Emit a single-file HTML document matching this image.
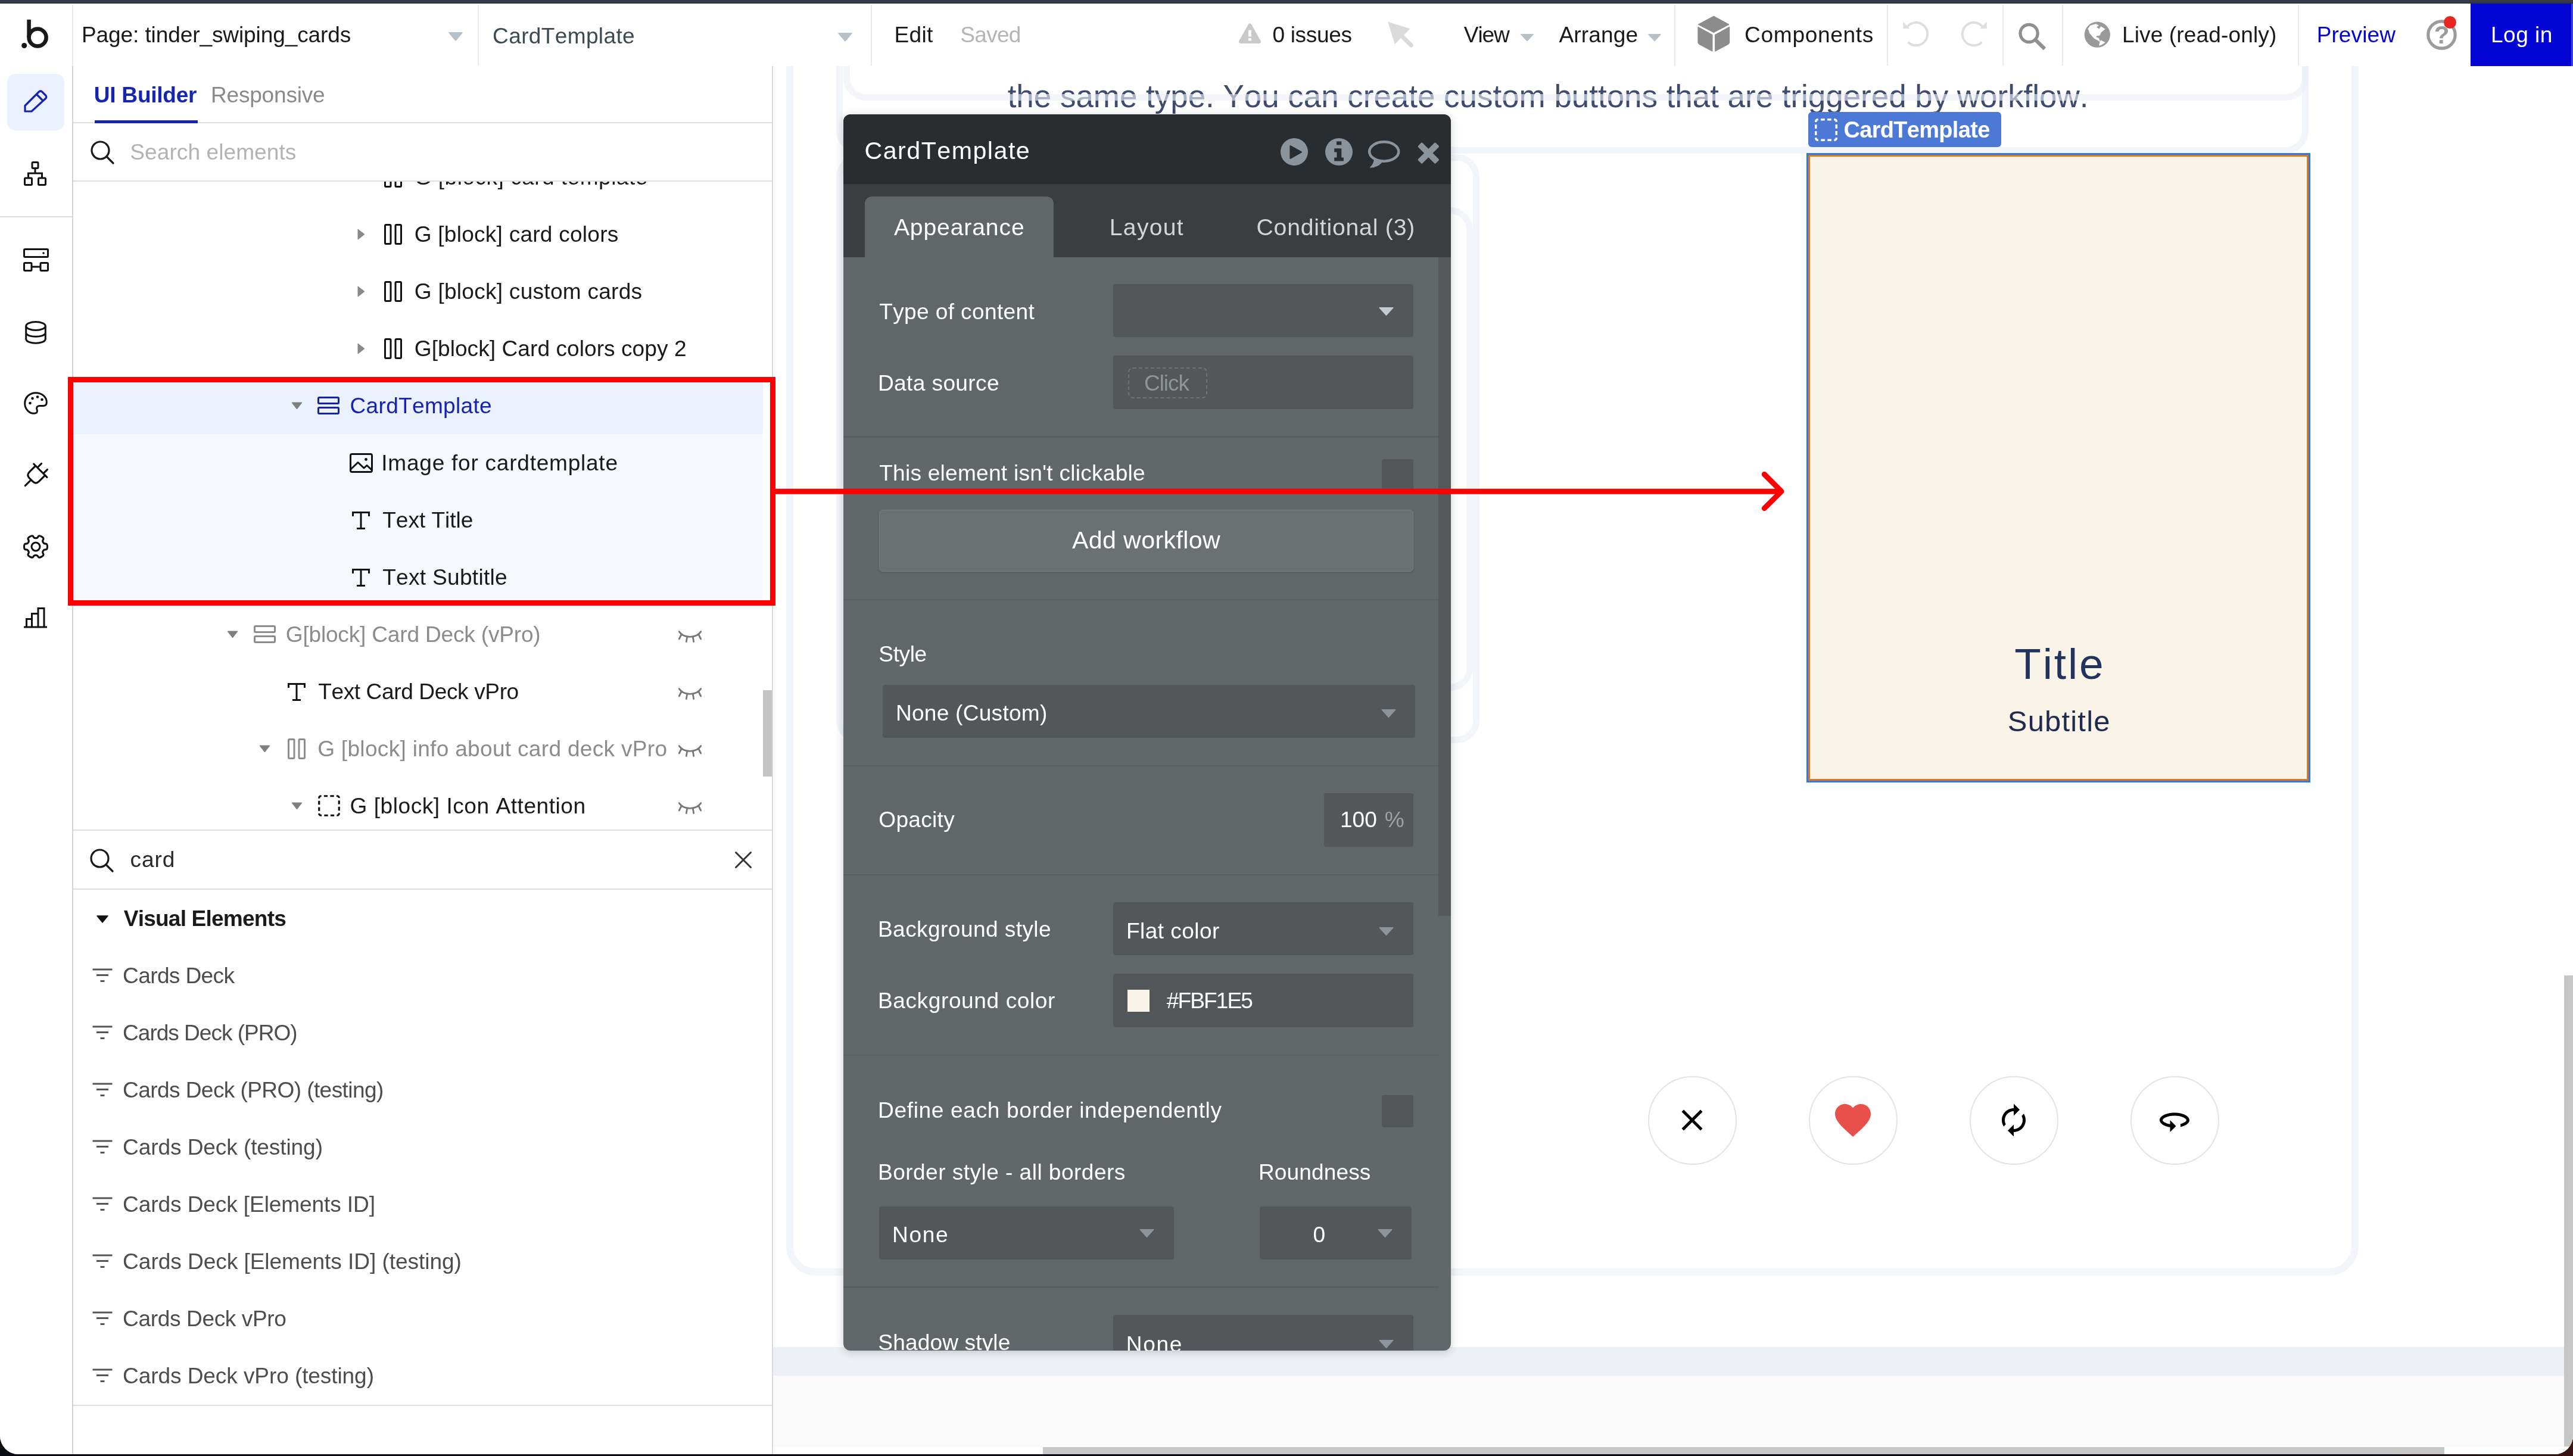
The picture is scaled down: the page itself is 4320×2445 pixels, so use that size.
<!DOCTYPE html>
<html lang="en"><head><meta charset="utf-8">
<title>Bubble editor - tinder_swiping_cards</title>
<style>

html,body{margin:0;padding:0;}
body{width:4320px;height:2445px;overflow:hidden;background:linear-gradient(90deg,#0b0d13 0%,#0b0d13 92%,#3a1414 100%);font-family:"Liberation Sans",Arial,sans-serif;}
#app{will-change:transform;position:absolute;left:0;top:0;width:4320px;height:2442px;overflow:hidden;background:#fff;border-radius:0 0 31px 31px;}
.layer{position:absolute;left:0;top:0;width:4320px;height:2445px;pointer-events:none;}
#app div,#app svg{position:absolute;}
.t{white-space:pre;font-kerning:none;font-variant-ligatures:none;}
svg{overflow:visible;}

</style></head><body>
<div id="app">
<div class="layer" id="L-canvas">
<div style="left:1298px;top:2262px;width:3022px;height:48px;background:#ecf0f4;"></div>
<div style="left:1298px;top:2310px;width:3022px;height:135px;background:#fafafa;"></div>
<div style="left:1320px;top:-200px;width:2640px;height:2342px;background:transparent;border:12px solid #f2f5f9;border-radius:50px;box-sizing:border-box;"></div>
<div style="left:1404px;top:-200px;width:2472px;height:458px;background:transparent;border:11px solid #f2f5f9;border-radius:38px;box-sizing:border-box;"></div>
<div style="left:1404px;top:259px;width:1080px;height:989px;background:transparent;border:11px solid #f2f5f9;border-radius:38px;box-sizing:border-box;"></div>
<div style="left:1416px;top:348px;width:1057px;height:812px;background:transparent;border:11px solid #f2f5f9;border-radius:38px;box-sizing:border-box;"></div>
<div class="t" style="left:1691.70px;top:134.64px;font-size:53px;line-height:53px;color:#3d4b6c;letter-spacing:-0.039px;">the same type. You can create custom buttons that are triggered by workflow.</div>
<div style="left:1416px;top:-200px;width:2460px;height:369px;background:transparent;border:11px solid rgba(236,239,245,0.62);border-radius:38px;box-sizing:border-box;"></div>
<div style="left:3036px;top:188px;width:324px;height:59px;background:#4c78d6;border-radius:6px;"></div>
<svg style="left:3047px;top:199px;" width="38" height="38" viewBox="0 0 38 38"><rect x="1.75" y="1.75" width="34.5" height="34.5" rx="3" fill="none" stroke="#fff" stroke-width="3.5" pathLength="12" stroke-dasharray="0.6 0.4" stroke-dashoffset="0.52"/></svg>
<div class="t" style="left:3095.44px;top:199.03px;font-size:38px;line-height:38px;color:#fff;letter-spacing:-0.686px;font-weight:700;">CardTemplate</div>
<div style="left:3033px;top:256.5px;width:846px;height:1057px;background:#faf3e8;box-sizing:border-box;border:3px solid #e0761c;outline:0;box-shadow:0 0 0 0 #000;"></div>
<div style="left:3033px;top:256.5px;width:846px;height:1057px;background:transparent;box-sizing:border-box;border:3px solid #2f7be0;"></div>
<div style="left:3036px;top:259.5px;width:840px;height:1051px;background:transparent;box-sizing:border-box;border:3px solid #e0761c;"></div>
<div style="left:3871px;top:262.5px;width:2px;height:1045px;background:#fff;"></div>
<div class="t" style="left:3382.16px;top:1078.01px;font-size:73px;line-height:73px;color:#23345c;letter-spacing:2.894px;">Title</div>
<div class="t" style="left:3370.77px;top:1187.02px;font-size:49px;line-height:49px;color:#1f2c50;letter-spacing:1.181px;">Subtitle</div>
<div style="left:2766.5px;top:1806.5px;width:149px;height:149px;background:#fff;box-sizing:border-box;border:2.5px solid #e1e4ea;border-radius:50%;"></div>
<div style="left:3036.5px;top:1806.5px;width:149px;height:149px;background:#fff;box-sizing:border-box;border:2.5px solid #e1e4ea;border-radius:50%;"></div>
<div style="left:3306.5px;top:1806.5px;width:149px;height:149px;background:#fff;box-sizing:border-box;border:2.5px solid #e1e4ea;border-radius:50%;"></div>
<div style="left:3576.5px;top:1806.5px;width:149px;height:149px;background:#fff;box-sizing:border-box;border:2.5px solid #e1e4ea;border-radius:50%;"></div>
<svg style="left:2811px;top:1851px;" width="60" height="60" viewBox="0 0 24 24"><path d="M19 6.41L17.59 5 12 10.59 6.41 5 5 6.41 10.59 12 5 17.59 6.41 19 12 13.41 17.59 19 19 17.59 13.41 12z" fill="#000"/></svg>
<svg style="left:3075px;top:1844.5px;" width="72" height="72" viewBox="0 0 24 24"><path d="M12 21.35l-1.45-1.32C5.4 15.36 2 12.28 2 8.5 2 5.42 4.42 3 7.5 3c1.74 0 3.41.81 4.5 2.09C13.09 3.81 14.76 3 16.5 3 19.58 3 22 5.42 22 8.5c0 3.78-3.4 6.86-8.55 11.54L12 21.35z" fill="#e8504b"/></svg>
<svg style="left:3351px;top:1851px;" width="60" height="60" viewBox="0 0 24 24"><path d="M12 6v3l4-4-4-4v3c-4.42 0-8 3.58-8 8 0 1.57.46 3.03 1.24 4.26L6.7 14.8c-.45-.83-.7-1.79-.7-2.8 0-3.31 2.69-6 6-6zm6.76 1.74L17.3 9.2c.44.84.7 1.79.7 2.8 0 3.31-2.69 6-6 6v-3l-4 4 4 4v-3c4.42 0 8-3.58 8-8 0-1.57-.46-3.03-1.24-4.26z" fill="#000"/></svg>
<svg style="left:3621px;top:1851px;" width="60" height="60" viewBox="0 0 24 24"><path d="M12 7C6.48 7 2 9.24 2 12c0 2.24 2.94 4.13 7 4.77V20l4-4-4-4v2.73c-3.15-.56-5-1.9-5-2.73 0-1.06 3.04-3 8-3s8 1.94 8 3c0 .73-1.46 1.89-4 2.53v2.05c3.53-.77 6-2.53 6-4.58 0-2.76-4.48-5-10-5z" fill="#000"/></svg>
<div style="left:4305px;top:1638px;width:15px;height:791px;background:#c6c6c6;"></div>
<div style="left:1298px;top:2429.5px;width:3022px;height:13px;background:#fff;"></div>
<div style="left:1751px;top:2430px;width:2353px;height:11.5px;background:#c6c6c6;"></div>
</div>
<div class="layer" id="L-panel">
<div style="left:1416px;top:191.5px;width:1020px;height:2076px;border-radius:12px;box-shadow:0 2px 14px rgba(20,30,50,0.22);background:#616669;overflow:hidden;">
<div id="pp" style="position:absolute;left:-1416px;top:-191.5px;width:4320px;height:2445px;">
<div style="position:absolute;left:1416px;top:191.5px;width:1020px;height:117.5px;background:#292d30;"></div>
<div style="position:absolute;left:1416px;top:309px;width:1020px;height:122.5px;background:#3a3e41;"></div>
<div style="position:absolute;left:1452px;top:330px;width:316.5px;height:110px;background:#616669;border-radius:12px 12px 0 0;"></div>
<div style="position:absolute;left:2415px;top:431.5px;width:21px;height:1106.5px;background:#54585b;"></div>
<div style="position:absolute;left:1416px;top:732px;width:999px;height:2.5px;background:#5a5f62;"></div>
<div style="position:absolute;left:1416px;top:1005.5px;width:999px;height:2.5px;background:#5a5f62;"></div>
<div style="position:absolute;left:1416px;top:1284.5px;width:999px;height:2.5px;background:#5a5f62;"></div>
<div style="position:absolute;left:1416px;top:1467.5px;width:999px;height:2.5px;background:#5a5f62;"></div>
<div style="position:absolute;left:1416px;top:1770.5px;width:999px;height:2.5px;background:#5a5f62;"></div>
<div style="position:absolute;left:1416px;top:2160px;width:999px;height:2.5px;background:#5a5f62;"></div>
<div style="position:absolute;left:1869px;top:477px;width:504px;height:89px;background:#53575a;border-radius:4px;"></div>
<div style="position:absolute;left:1869px;top:597px;width:504px;height:89.5px;background:#53575a;border-radius:4px;"></div>
<div style="position:absolute;left:1893.5px;top:616.5px;width:133.5px;height:52px;background:transparent;box-sizing:border-box;border:2px dashed #6d7275;border-radius:8px;"></div>
<div style="position:absolute;left:2319.5px;top:771px;width:53.5px;height:54px;background:#53575a;border-radius:4px;"></div>
<div style="position:absolute;left:1476px;top:855.5px;width:897px;height:104px;background:#6b7073;box-sizing:border-box;border:1.5px solid #777c7f;border-radius:6px;box-shadow:0 2px 3px rgba(0,0,0,0.12);"></div>
<div style="position:absolute;left:1481.5px;top:1149.5px;width:894px;height:89.5px;background:#53575a;border-radius:4px;"></div>
<div style="position:absolute;left:2223px;top:1332px;width:150px;height:89.5px;background:#53575a;border-radius:4px;"></div>
<div style="position:absolute;left:1869px;top:1515px;width:504px;height:89px;background:#53575a;border-radius:4px;"></div>
<div style="position:absolute;left:1869px;top:1635px;width:504px;height:89.5px;background:#53575a;border-radius:4px;"></div>
<div style="position:absolute;left:1892.5px;top:1662px;width:37px;height:36.5px;background:#faf3e7;"></div>
<div style="position:absolute;left:2319.5px;top:1839px;width:53.5px;height:53.5px;background:#53575a;border-radius:4px;"></div>
<div style="position:absolute;left:1476px;top:2025.5px;width:494.5px;height:89px;background:#53575a;border-radius:4px;"></div>
<div style="position:absolute;left:2115px;top:2025.5px;width:255px;height:89px;background:#53575a;border-radius:4px;"></div>
<div style="position:absolute;left:1869px;top:2208px;width:504px;height:92px;background:#53575a;border-radius:4px;"></div>
</div></div>
<div style="left:1416px;top:191.5px;width:1020px;height:2076px;border-radius:12px;overflow:hidden;">
<div class="sub" style="position:absolute;left:-1416px;top:-191.5px;width:4320px;height:2445px;">
<div class="t" style="left:1451.41px;top:233.12px;font-size:41.2px;line-height:41.2px;color:#fff;letter-spacing:1.489px;position:absolute;">CardTemplate</div>
<div class="t" style="left:1500.92px;top:362.27px;font-size:39.14px;line-height:39.14px;color:#fff;letter-spacing:0.859px;position:absolute;">Appearance</div>
<div class="t" style="left:1862.79px;top:362.27px;font-size:39.14px;line-height:39.14px;color:#d3d6d8;letter-spacing:1.296px;position:absolute;">Layout</div>
<div class="t" style="left:2109.51px;top:362.27px;font-size:39.14px;line-height:39.14px;color:#d3d6d8;letter-spacing:0.812px;position:absolute;">Conditional (3)</div>
<div class="t" style="left:1476.17px;top:504.61px;font-size:37.08px;line-height:37.08px;color:#fff;letter-spacing:0.365px;position:absolute;">Type of content</div>
<div class="t" style="left:1473.96px;top:624.61px;font-size:37.08px;line-height:37.08px;color:#fff;letter-spacing:0.377px;position:absolute;">Data source</div>
<div class="t" style="left:1921.12px;top:624.61px;font-size:37.08px;line-height:37.08px;color:#8f9498;letter-spacing:-1.126px;position:absolute;">Click</div>
<div class="t" style="left:1476.17px;top:775.61px;font-size:37.08px;line-height:37.08px;color:#fff;letter-spacing:0.245px;position:absolute;">This element isn't clickable</div>
<div class="t" style="left:1799.92px;top:886.52px;font-size:41.2px;line-height:41.2px;color:#fff;letter-spacing:0.361px;position:absolute;">Add workflow</div>
<div class="t" style="left:1475.32px;top:1079.61px;font-size:37.08px;line-height:37.08px;color:#fff;letter-spacing:-0.401px;position:absolute;">Style</div>
<div class="t" style="left:1503.96px;top:1178.61px;font-size:37.08px;line-height:37.08px;color:#fff;letter-spacing:0.246px;position:absolute;">None (Custom)</div>
<div class="t" style="left:1475.24px;top:1358.31px;font-size:37.08px;line-height:37.08px;color:#fff;letter-spacing:0.304px;position:absolute;">Opacity</div>
<div class="t" style="left:2249.98px;top:1358.31px;font-size:37.08px;line-height:37.08px;color:#fff;position:absolute;">100</div>
<div class="t" style="left:2324.68px;top:1358.31px;font-size:37.08px;line-height:37.08px;color:#9da2a6;position:absolute;">%</div>
<div class="t" style="left:1473.96px;top:1541.61px;font-size:37.08px;line-height:37.08px;color:#fff;letter-spacing:0.417px;position:absolute;">Background style</div>
<div class="t" style="left:1890.96px;top:1545.21px;font-size:37.08px;line-height:37.08px;color:#fff;letter-spacing:0.441px;position:absolute;">Flat color</div>
<div class="t" style="left:1473.96px;top:1662.21px;font-size:37.08px;line-height:37.08px;color:#fff;letter-spacing:0.593px;position:absolute;">Background color</div>
<div class="t" style="left:1958.84px;top:1662.21px;font-size:37.08px;line-height:37.08px;color:#fff;letter-spacing:-1.918px;position:absolute;">#FBF1E5</div>
<div class="t" style="left:1473.96px;top:1845.61px;font-size:37.08px;line-height:37.08px;color:#fff;letter-spacing:0.662px;position:absolute;">Define each border independently</div>
<div class="t" style="left:1473.96px;top:1949.61px;font-size:37.08px;line-height:37.08px;color:#fff;letter-spacing:0.459px;position:absolute;">Border style - all borders</div>
<div class="t" style="left:2112.96px;top:1949.61px;font-size:37.08px;line-height:37.08px;color:#fff;letter-spacing:0.099px;position:absolute;">Roundness</div>
<div class="t" style="left:1497.96px;top:2055.11px;font-size:37.08px;line-height:37.08px;color:#fff;letter-spacing:1.682px;position:absolute;">None</div>
<div class="t" style="left:2204.55px;top:2055.11px;font-size:37.08px;line-height:37.08px;color:#fff;position:absolute;">0</div>
<div class="t" style="left:1474.32px;top:2235.61px;font-size:37.08px;line-height:37.08px;color:#fff;letter-spacing:0.135px;position:absolute;">Shadow style</div>
<div class="t" style="left:1890.76px;top:2238.61px;font-size:37.08px;line-height:37.08px;color:#fff;letter-spacing:1.648px;position:absolute;">None</div>
<svg style="left:2315px;top:516px;position:absolute;" width="25" height="14.5" viewBox="0 0 25 14.5"><path d="M1.2 0.8 H23.8 L12.5 13.3 Z" fill="#c3cad1" stroke="#c3cad1" stroke-width="1.6" stroke-linejoin="round"/></svg>
<svg style="left:2318.5px;top:1190.5px;position:absolute;" width="25" height="14.5" viewBox="0 0 25 14.5"><path d="M1.2 0.8 H23.8 L12.5 13.3 Z" fill="#8e959a" stroke="#8e959a" stroke-width="1.6" stroke-linejoin="round"/></svg>
<svg style="left:2315px;top:1557px;position:absolute;" width="25" height="14.5" viewBox="0 0 25 14.5"><path d="M1.2 0.8 H23.8 L12.5 13.3 Z" fill="#8e959a" stroke="#8e959a" stroke-width="1.6" stroke-linejoin="round"/></svg>
<svg style="left:1913px;top:2064px;position:absolute;" width="25" height="14.5" viewBox="0 0 25 14.5"><path d="M1.2 0.8 H23.8 L12.5 13.3 Z" fill="#8e959a" stroke="#8e959a" stroke-width="1.6" stroke-linejoin="round"/></svg>
<svg style="left:2313px;top:2064px;position:absolute;" width="25" height="14.5" viewBox="0 0 25 14.5"><path d="M1.2 0.8 H23.8 L12.5 13.3 Z" fill="#8e959a" stroke="#8e959a" stroke-width="1.6" stroke-linejoin="round"/></svg>
<svg style="left:2315px;top:2250px;position:absolute;" width="25" height="14.5" viewBox="0 0 25 14.5"><path d="M1.2 0.8 H23.8 L12.5 13.3 Z" fill="#8e959a" stroke="#8e959a" stroke-width="1.6" stroke-linejoin="round"/></svg>
<svg style="left:2150px;top:232px;position:absolute;" width="46" height="46" viewBox="0 0 46 46"><circle cx="23" cy="23" r="23" fill="#8b949b"/><path d="M16.6 13.2 L34.6 23.4 L16.6 33.6 Z" fill="#292d30" stroke="#292d30" stroke-width="2.4" stroke-linejoin="round"/></svg>
<svg style="left:2225px;top:232px;position:absolute;" width="46" height="46" viewBox="0 0 46 46"><circle cx="23" cy="23" r="23" fill="#8b949b"/><rect x="19" y="5.4" width="8.3" height="6" fill="#292d30"/><path d="M15.2 17.3 H27.3 V32.4 H30.9 V38.4 H15.2 V32.4 H19.5 V23.4 H15.2 Z" fill="#292d30"/></svg>
<svg style="left:2296px;top:235px;position:absolute;" width="56" height="48" viewBox="0 0 56 48"><path d="M11.5 33 Q10.5 41 4.6 46.2 Q16 46 24.5 37 Z" fill="#8b949b" stroke="#8b949b" stroke-width="1.2" stroke-linejoin="round"/><ellipse cx="27.7" cy="19.5" rx="24.6" ry="16.2" fill="#292d30" stroke="#8b949b" stroke-width="4.4"/></svg>
<svg style="left:2380px;top:239px;position:absolute;" width="37" height="37" viewBox="0 0 37 37"><g transform="translate(18.35 18.1) rotate(45)" fill="#8b949b"><rect x="-20.85" y="-5.1" width="41.7" height="10.2" rx="2"/><rect x="-5.1" y="-20.85" width="10.2" height="41.7" rx="2"/></g></svg>
</div></div>
</div>
<div class="layer" id="L-left">
<div style="left:0px;top:111px;width:1298px;height:2334px;background:#fff;"></div>
<div style="left:120.5px;top:111px;width:2px;height:2334px;background:#d4d4d4;"></div>
<div style="left:1296px;top:111px;width:2px;height:2334px;background:#d9d9d9;"></div>
<div style="left:0px;top:362.5px;width:121px;height:2px;background:#dcdcdc;"></div>
<div style="left:12px;top:123.5px;width:96px;height:95.5px;background:#ebf1fe;border-radius:14px;"></div>
<div class="t" style="left:157.77px;top:140.61px;font-size:37.08px;line-height:37.08px;color:#1626b0;letter-spacing:-0.259px;font-weight:700;">UI Builder</div>
<div class="t" style="left:353.96px;top:140.61px;font-size:37.08px;line-height:37.08px;color:#8a8a8a;letter-spacing:-0.229px;">Responsive</div>
<div style="left:122.5px;top:204.5px;width:1173.5px;height:2px;background:#dedede;"></div>
<div style="left:159px;top:201.5px;width:172.5px;height:5px;background:#1626b0;"></div>
<svg style="left:151.5px;top:236px;" width="40" height="40" viewBox="0 0 40 40"><circle cx="16.5" cy="16.5" r="14.5" fill="none" stroke="#1a1a1a" stroke-width="3.2"/><path d="M27 27 L38 38" stroke="#1a1a1a" stroke-width="3.2" stroke-linecap="round"/></svg>
<div class="t" style="left:218.32px;top:236.61px;font-size:37.08px;line-height:37.08px;color:#b3b3b3;letter-spacing:0.056px;">Search elements</div>
<div style="left:122.5px;top:305px;width:1173.5px;height:1088px;overflow:hidden;"><div style="left:-122.5px;top:-305px;width:4320px;height:2445px;">
<div style="left:122.5px;top:633px;width:1158.5px;height:96px;background:#ebf1fe;"></div>
<div style="left:122.5px;top:729px;width:1158.5px;height:288px;background:#f5f8fe;"></div>
<svg style="left:645px;top:279.5px;" width="30" height="35" viewBox="0 0 30 35"><rect x="1.5" y="1.5" width="9.5" height="32" rx="1.5" fill="none" stroke="#111" stroke-width="3"/><rect x="19" y="1.5" width="9.5" height="32" rx="1.5" fill="none" stroke="#111" stroke-width="3"/></svg>
<div class="t" style="left:695.74px;top:279.01px;font-size:37.08px;line-height:37.08px;color:#1a1a1a;letter-spacing:0.470px;">G [block] card template</div>
<svg style="left:599.7px;top:383.5px;" width="13" height="19" viewBox="0 0 13 19"><path d="M1 1 L12 9.5 L1 18 Z" fill="#8a8a8a" stroke="#8a8a8a" stroke-width="1" stroke-linejoin="round"/></svg>
<svg style="left:645px;top:375.5px;" width="30" height="35" viewBox="0 0 30 35"><rect x="1.5" y="1.5" width="9.5" height="32" rx="1.5" fill="none" stroke="#111" stroke-width="3"/><rect x="19" y="1.5" width="9.5" height="32" rx="1.5" fill="none" stroke="#111" stroke-width="3"/></svg>
<div class="t" style="left:695.74px;top:375.01px;font-size:37.08px;line-height:37.08px;color:#1a1a1a;letter-spacing:0.232px;">G [block] card colors</div>
<svg style="left:599.7px;top:479.5px;" width="13" height="19" viewBox="0 0 13 19"><path d="M1 1 L12 9.5 L1 18 Z" fill="#8a8a8a" stroke="#8a8a8a" stroke-width="1" stroke-linejoin="round"/></svg>
<svg style="left:645px;top:471.5px;" width="30" height="35" viewBox="0 0 30 35"><rect x="1.5" y="1.5" width="9.5" height="32" rx="1.5" fill="none" stroke="#111" stroke-width="3"/><rect x="19" y="1.5" width="9.5" height="32" rx="1.5" fill="none" stroke="#111" stroke-width="3"/></svg>
<div class="t" style="left:695.74px;top:471.01px;font-size:37.08px;line-height:37.08px;color:#1a1a1a;letter-spacing:0.253px;">G [block] custom cards</div>
<svg style="left:599.7px;top:575.5px;" width="13" height="19" viewBox="0 0 13 19"><path d="M1 1 L12 9.5 L1 18 Z" fill="#8a8a8a" stroke="#8a8a8a" stroke-width="1" stroke-linejoin="round"/></svg>
<svg style="left:645px;top:567.5px;" width="30" height="35" viewBox="0 0 30 35"><rect x="1.5" y="1.5" width="9.5" height="32" rx="1.5" fill="none" stroke="#111" stroke-width="3"/><rect x="19" y="1.5" width="9.5" height="32" rx="1.5" fill="none" stroke="#111" stroke-width="3"/></svg>
<div class="t" style="left:695.74px;top:567.01px;font-size:37.08px;line-height:37.08px;color:#1a1a1a;letter-spacing:0.053px;">G[block] Card colors copy 2</div>
<svg style="left:489px;top:674.5px;" width="19" height="13" viewBox="0 0 19 13"><path d="M1 1 H18 L9.5 12 Z" fill="#7f7f7f" stroke="#7f7f7f" stroke-width="1" stroke-linejoin="round"/></svg>
<svg style="left:533px;top:666px;" width="37" height="30" viewBox="0 0 37 30"><rect x="1.5" y="1.5" width="34" height="10" rx="1.5" fill="none" stroke="#1424b0" stroke-width="3"/><rect x="1.5" y="18.5" width="34" height="10" rx="1.5" fill="none" stroke="#1424b0" stroke-width="3"/></svg>
<div class="t" style="left:587.52px;top:663.01px;font-size:37.08px;line-height:37.08px;color:#1424b0;letter-spacing:0.290px;">CardTemplate</div>
<svg style="left:586.6px;top:760.5px;" width="39" height="33" viewBox="0 0 39 33"><rect x="1.5" y="1.5" width="36" height="30" rx="2.5" fill="none" stroke="#111" stroke-width="3"/><path d="M2 27 L14 15.5 L24 25 L29 20.5 L37 28" fill="none" stroke="#111" stroke-width="3" stroke-linejoin="round"/><circle cx="27.5" cy="10.5" r="2.4" fill="#111"/></svg>
<div class="t" style="left:640.28px;top:759.01px;font-size:37.08px;line-height:37.08px;color:#1a1a1a;letter-spacing:0.737px;">Image for cardtemplate</div>
<svg style="left:591.4px;top:858.5px;" width="30" height="30" viewBox="0 0 30 30"><path d="M1.5 8 V1.5 H28.5 V8 M15 1.5 V28 M8 28.5 H22" fill="none" stroke="#111" stroke-width="3" stroke-linejoin="miter"/></svg>
<div class="t" style="left:642.17px;top:855.01px;font-size:37.08px;line-height:37.08px;color:#1a1a1a;letter-spacing:-0.021px;">Text Title</div>
<svg style="left:591.4px;top:954.5px;" width="30" height="30" viewBox="0 0 30 30"><path d="M1.5 8 V1.5 H28.5 V8 M15 1.5 V28 M8 28.5 H22" fill="none" stroke="#111" stroke-width="3" stroke-linejoin="miter"/></svg>
<div class="t" style="left:642.17px;top:951.01px;font-size:37.08px;line-height:37.08px;color:#1a1a1a;letter-spacing:0.282px;">Text Subtitle</div>
<svg style="left:381px;top:1058.5px;" width="19" height="13" viewBox="0 0 19 13"><path d="M1 1 H18 L9.5 12 Z" fill="#7f7f7f" stroke="#7f7f7f" stroke-width="1" stroke-linejoin="round"/></svg>
<svg style="left:425.5px;top:1050px;" width="37" height="30" viewBox="0 0 37 30"><rect x="1.5" y="1.5" width="34" height="10" rx="1.5" fill="none" stroke="#8c8c8c" stroke-width="3"/><rect x="1.5" y="18.5" width="34" height="10" rx="1.5" fill="none" stroke="#8c8c8c" stroke-width="3"/></svg>
<div class="t" style="left:479.74px;top:1047.01px;font-size:37.08px;line-height:37.08px;color:#8c8c8c;letter-spacing:-0.197px;">G[block] Card Deck (vPro)</div>
<svg style="left:1137.5px;top:1057.5px;" width="41" height="22" viewBox="0 0 41 22"><path d="M2.2 2.6 C10 14.2 31 14.2 38.8 2.6 M5.8 8 L2.3 15 M15.6 12.2 L14.3 19.6 M25.4 12.2 L26.7 19.6 M35.2 8 L38.7 15" fill="none" stroke="#787878" stroke-width="2.8" stroke-linecap="round"/></svg>
<svg style="left:483px;top:1146.5px;" width="30" height="30" viewBox="0 0 30 30"><path d="M1.5 8 V1.5 H28.5 V8 M15 1.5 V28 M8 28.5 H22" fill="none" stroke="#111" stroke-width="3" stroke-linejoin="miter"/></svg>
<div class="t" style="left:534.17px;top:1143.01px;font-size:37.08px;line-height:37.08px;color:#1a1a1a;letter-spacing:-0.390px;">Text Card Deck vPro</div>
<svg style="left:1137.5px;top:1153.5px;" width="41" height="22" viewBox="0 0 41 22"><path d="M2.2 2.6 C10 14.2 31 14.2 38.8 2.6 M5.8 8 L2.3 15 M15.6 12.2 L14.3 19.6 M25.4 12.2 L26.7 19.6 M35.2 8 L38.7 15" fill="none" stroke="#787878" stroke-width="2.8" stroke-linecap="round"/></svg>
<svg style="left:434.8px;top:1250.5px;" width="19" height="13" viewBox="0 0 19 13"><path d="M1 1 H18 L9.5 12 Z" fill="#7f7f7f" stroke="#7f7f7f" stroke-width="1" stroke-linejoin="round"/></svg>
<svg style="left:483px;top:1239.5px;" width="30" height="35" viewBox="0 0 30 35"><rect x="1.5" y="1.5" width="9.5" height="32" rx="1.5" fill="none" stroke="#8c8c8c" stroke-width="3"/><rect x="19" y="1.5" width="9.5" height="32" rx="1.5" fill="none" stroke="#8c8c8c" stroke-width="3"/></svg>
<div class="t" style="left:533.14px;top:1239.01px;font-size:37.08px;line-height:37.08px;color:#8c8c8c;letter-spacing:0.292px;">G [block] info about card deck vPro</div>
<svg style="left:1137.5px;top:1249.5px;" width="41" height="22" viewBox="0 0 41 22"><path d="M2.2 2.6 C10 14.2 31 14.2 38.8 2.6 M5.8 8 L2.3 15 M15.6 12.2 L14.3 19.6 M25.4 12.2 L26.7 19.6 M35.2 8 L38.7 15" fill="none" stroke="#787878" stroke-width="2.8" stroke-linecap="round"/></svg>
<svg style="left:489px;top:1346.5px;" width="19" height="13" viewBox="0 0 19 13"><path d="M1 1 H18 L9.5 12 Z" fill="#7f7f7f" stroke="#7f7f7f" stroke-width="1" stroke-linejoin="round"/></svg>
<svg style="left:534px;top:1335px;" width="37" height="36" viewBox="0 0 37 36"><rect x="1.75" y="1.75" width="33.5" height="32.5" rx="3" fill="none" stroke="#111" stroke-width="3.2" pathLength="12" stroke-dasharray="0.6 0.4" stroke-dashoffset="0.52"/></svg>
<div class="t" style="left:587.54px;top:1335.01px;font-size:37.08px;line-height:37.08px;color:#1a1a1a;letter-spacing:0.531px;">G [block] Icon Attention</div>
<svg style="left:1137.5px;top:1345.5px;" width="41" height="22" viewBox="0 0 41 22"><path d="M2.2 2.6 C10 14.2 31 14.2 38.8 2.6 M5.8 8 L2.3 15 M15.6 12.2 L14.3 19.6 M25.4 12.2 L26.7 19.6 M35.2 8 L38.7 15" fill="none" stroke="#787878" stroke-width="2.8" stroke-linecap="round"/></svg>
<div style="left:1281px;top:1158.5px;width:15px;height:145.5px;background:#c4c4c4;"></div>
</div></div>
<div style="left:122.5px;top:303px;width:1173.5px;height:2px;background:#dedede;"></div>
<div style="left:122.5px;top:1392.5px;width:1173.5px;height:2px;background:#dedede;"></div>
<div style="left:122.5px;top:1491.5px;width:1173.5px;height:2px;background:#dedede;"></div>
<div style="left:122.5px;top:2358.5px;width:1173.5px;height:2px;background:#dedede;"></div>
<svg style="left:151px;top:1425px;" width="40" height="40" viewBox="0 0 40 40"><circle cx="16.5" cy="16.5" r="14.5" fill="none" stroke="#1a1a1a" stroke-width="3.2"/><path d="M27 27 L38 38" stroke="#1a1a1a" stroke-width="3.2" stroke-linecap="round"/></svg>
<div class="t" style="left:218.42px;top:1424.61px;font-size:37.08px;line-height:37.08px;color:#2a2a2a;letter-spacing:0.944px;">card</div>
<svg style="left:1234px;top:1429.5px;" width="28" height="28" viewBox="0 0 28 28"><path d="M1.5 1.5 L26.5 26.5 M26.5 1.5 L1.5 26.5" stroke="#333" stroke-width="3" stroke-linecap="round"/></svg>
<svg style="left:161.5px;top:1536.5px;" width="20" height="13" viewBox="0 0 20 13"><path d="M1 1 H19 L10 12 Z" fill="#111" stroke="#111" stroke-width="1.5" stroke-linejoin="round"/></svg>
<div class="t" style="left:207.75px;top:1524.01px;font-size:37.08px;line-height:37.08px;color:#1a1a1a;letter-spacing:-0.809px;font-weight:700;">Visual Elements</div>
<svg style="left:154.5px;top:1626px;" width="34" height="24" viewBox="0 0 34 24"><path d="M0.5 2 H33.5 M7 11.5 H27 M13.5 21.5 H20.5" stroke="#555" stroke-width="3.2" fill="none"/></svg>
<div class="t" style="left:206.12px;top:1620.31px;font-size:37.08px;line-height:37.08px;color:#4d4d4d;letter-spacing:-0.652px;">Cards Deck</div>
<svg style="left:154.5px;top:1722px;" width="34" height="24" viewBox="0 0 34 24"><path d="M0.5 2 H33.5 M7 11.5 H27 M13.5 21.5 H20.5" stroke="#555" stroke-width="3.2" fill="none"/></svg>
<div class="t" style="left:206.12px;top:1716.31px;font-size:37.08px;line-height:37.08px;color:#4d4d4d;letter-spacing:-1.037px;">Cards Deck (PRO)</div>
<svg style="left:154.5px;top:1818px;" width="34" height="24" viewBox="0 0 34 24"><path d="M0.5 2 H33.5 M7 11.5 H27 M13.5 21.5 H20.5" stroke="#555" stroke-width="3.2" fill="none"/></svg>
<div class="t" style="left:206.12px;top:1812.31px;font-size:37.08px;line-height:37.08px;color:#4d4d4d;letter-spacing:-0.604px;">Cards Deck (PRO) (testing)</div>
<svg style="left:154.5px;top:1914px;" width="34" height="24" viewBox="0 0 34 24"><path d="M0.5 2 H33.5 M7 11.5 H27 M13.5 21.5 H20.5" stroke="#555" stroke-width="3.2" fill="none"/></svg>
<div class="t" style="left:206.12px;top:1908.31px;font-size:37.08px;line-height:37.08px;color:#4d4d4d;letter-spacing:-0.108px;">Cards Deck (testing)</div>
<svg style="left:154.5px;top:2010px;" width="34" height="24" viewBox="0 0 34 24"><path d="M0.5 2 H33.5 M7 11.5 H27 M13.5 21.5 H20.5" stroke="#555" stroke-width="3.2" fill="none"/></svg>
<div class="t" style="left:206.12px;top:2004.31px;font-size:37.08px;line-height:37.08px;color:#4d4d4d;letter-spacing:-0.114px;">Cards Deck [Elements ID]</div>
<svg style="left:154.5px;top:2106px;" width="34" height="24" viewBox="0 0 34 24"><path d="M0.5 2 H33.5 M7 11.5 H27 M13.5 21.5 H20.5" stroke="#555" stroke-width="3.2" fill="none"/></svg>
<div class="t" style="left:206.12px;top:2100.31px;font-size:37.08px;line-height:37.08px;color:#4d4d4d;letter-spacing:-0.061px;">Cards Deck [Elements ID] (testing)</div>
<svg style="left:154.5px;top:2202px;" width="34" height="24" viewBox="0 0 34 24"><path d="M0.5 2 H33.5 M7 11.5 H27 M13.5 21.5 H20.5" stroke="#555" stroke-width="3.2" fill="none"/></svg>
<div class="t" style="left:206.12px;top:2196.31px;font-size:37.08px;line-height:37.08px;color:#4d4d4d;letter-spacing:-0.385px;">Cards Deck vPro</div>
<svg style="left:154.5px;top:2298px;" width="34" height="24" viewBox="0 0 34 24"><path d="M0.5 2 H33.5 M7 11.5 H27 M13.5 21.5 H20.5" stroke="#555" stroke-width="3.2" fill="none"/></svg>
<div class="t" style="left:206.12px;top:2292.31px;font-size:37.08px;line-height:37.08px;color:#4d4d4d;letter-spacing:-0.108px;">Cards Deck vPro (testing)</div>
<svg style="left:40px;top:151px;" width="40" height="38" viewBox="0 0 40 38"><path d="M2 36 V26.5 L25.5 3 Q28 1 30.5 3 L37 9.5 Q38.5 12 37 14 L13 36 Z M21.5 7.5 L32.5 18.5" fill="none" stroke="#1424b0" stroke-width="3.2" stroke-linejoin="round"/></svg>
<svg style="left:40px;top:270.5px;" width="38" height="41" viewBox="0 0 38 41"><rect x="14" y="1.5" width="10" height="10" rx="1.5" fill="none" stroke="#111" stroke-width="3"/><rect x="1.5" y="28" width="12" height="11.5" rx="1.5" fill="none" stroke="#111" stroke-width="3"/><rect x="24.5" y="28" width="12" height="11.5" rx="1.5" fill="none" stroke="#111" stroke-width="3"/><path d="M19 11.5 V20 M7.5 28 V20 H30.5 V28" fill="none" stroke="#111" stroke-width="3"/></svg>
<svg style="left:38.5px;top:416.5px;" width="43" height="39" viewBox="0 0 43 39"><rect x="1.5" y="1.5" width="40" height="13" rx="1.5" fill="none" stroke="#111" stroke-width="3"/><circle cx="34" cy="8" r="1.8" fill="#111"/><rect x="1.5" y="24.5" width="12.5" height="13" rx="1.5" fill="none" stroke="#111" stroke-width="3"/><rect x="29" y="24.5" width="12.5" height="13" rx="1.5" fill="none" stroke="#111" stroke-width="3"/><path d="M14 31 H29" stroke="#111" stroke-width="3"/></svg>
<svg style="left:41.5px;top:538.5px;" width="36" height="39" viewBox="0 0 36 39"><ellipse cx="18" cy="8.5" rx="16.3" ry="7" fill="none" stroke="#111" stroke-width="3"/><path d="M1.7 8.5 V30 C1.7 39.5 34.3 39.5 34.3 30 V8.5 M1.7 19.5 C1.7 28.5 34.3 28.5 34.3 19.5" fill="none" stroke="#111" stroke-width="3"/></svg>
<svg style="left:39.5px;top:658px;" width="40" height="38" viewBox="0 0 40 38"><path d="M20 1.7 C9 1.7 1.7 9.5 1.7 19.5 C1.7 28.5 8.5 36.3 17 36.3 C22 36.3 23.5 33 22 30 C20.5 26.5 22.5 23.5 26.5 23.5 H32.5 C36 23.5 38.3 21.5 38.3 17.5 C38.3 8.5 30 1.7 20 1.7 Z" fill="none" stroke="#111" stroke-width="3"/><circle cx="10.5" cy="19" r="2.3" fill="#111"/><circle cx="14.5" cy="11" r="2.3" fill="#111"/><circle cx="23" cy="8.5" r="2.3" fill="#111"/><circle cx="30.5" cy="13" r="2.3" fill="#111"/></svg>
<svg style="left:0px;top:0px;" width="121" height="900" viewBox="0 0 121 900"><g transform="translate(67.75 790.2) rotate(45)" fill="none" stroke="#111" stroke-width="3.1" stroke-linecap="round" stroke-linejoin="round"><path d="M-15.8 0 H15.8 M-7 0 V-9.6 M7 0 V-9.6 M0 22 V36"/><path d="M-11.3 0 V14.5 Q-11.3 22 -3.8 22 H3.8 Q11.3 22 11.3 14.5 V0"/></g></svg>
<svg style="left:39px;top:898px;" width="42" height="40" viewBox="0 0 42 40"><path d="M25.1 3.1 Q26.2 0.5 30.8 3.1 Q35.3 5.7 33.6 8.0 Q31.8 10.2 33.4 12.9 Q34.9 15.5 37.7 15.1 Q40.5 14.8 40.5 20.0 Q40.5 25.2 37.7 24.9 Q34.9 24.5 33.4 27.1 Q31.8 29.8 33.6 32.0 Q35.3 34.3 30.8 36.9 Q26.2 39.5 25.1 36.9 Q24.0 34.3 21.0 34.3 Q18.0 34.3 16.9 36.9 Q15.8 39.5 11.2 36.9 Q6.7 34.3 8.4 32.0 Q10.2 29.8 8.6 27.1 Q7.1 24.5 4.3 24.9 Q1.5 25.2 1.5 20.0 Q1.5 14.8 4.3 15.1 Q7.1 15.5 8.6 12.9 Q10.2 10.2 8.4 8.0 Q6.7 5.7 11.2 3.1 Q15.8 0.5 16.9 3.1 Q18.0 5.7 21.0 5.7 Q24.0 5.7 25.1 3.1 Z" fill="none" stroke="#111" stroke-width="3.1" stroke-linejoin="round"/><circle cx="21" cy="20" r="7" fill="none" stroke="#111" stroke-width="3.1"/></svg>
<svg style="left:40px;top:1019.5px;" width="39" height="35" viewBox="0 0 39 35"><path d="M0 33 H39 M4.5 33 V19.5 H13.5 V33 M13.5 33 V10.5 H24 V33 M24 33 V1.5 H34 V33" fill="none" stroke="#111" stroke-width="3"/></svg>
</div>
<div class="layer" id="L-top">
<div style="left:0px;top:0px;width:4320px;height:111px;background:#fff;"></div>
<div style="left:0px;top:0px;width:4320px;height:6px;background:#353a4b;"></div>
<div style="left:0px;top:3.8px;width:4320px;height:2.2px;background:#2f2f39;"></div>
<div style="left:801.5px;top:8px;width:2px;height:103px;background:#e6ebf1;"></div>
<div style="left:1462px;top:8px;width:2px;height:103px;background:#e6ebf1;"></div>
<div style="left:2810.5px;top:8px;width:2px;height:103px;background:#e6ebf1;"></div>
<div style="left:3168px;top:8px;width:2px;height:103px;background:#e6ebf1;"></div>
<div style="left:3362px;top:8px;width:2px;height:103px;background:#e6ebf1;"></div>
<div style="left:3461.5px;top:8px;width:2px;height:103px;background:#e6ebf1;"></div>
<div style="left:3857.5px;top:8px;width:2px;height:103px;background:#e6ebf1;"></div>
<div style="left:120.5px;top:8px;width:2px;height:103px;background:#e6edf2;"></div>
<svg style="left:36px;top:32px;" width="47" height="50" viewBox="0 0 47 50"><circle cx="4.7" cy="44.5" r="4.5" fill="#1a1a1a"/><path d="M12.6 0.9 V31" stroke="#1a1a1a" stroke-width="6.6" fill="none"/><circle cx="27.1" cy="31" r="14.5" fill="none" stroke="#1a1a1a" stroke-width="6.6"/></svg>
<div class="t" style="left:136.96px;top:39.61px;font-size:37.08px;line-height:37.08px;color:#1a1a1a;letter-spacing:-0.126px;">Page: tinder_swiping_cards</div>
<div class="t" style="left:827.12px;top:41.61px;font-size:37.08px;line-height:37.08px;color:#3d4a52;letter-spacing:0.327px;">CardTemplate</div>
<div class="t" style="left:1501.46px;top:39.61px;font-size:37.08px;line-height:37.08px;color:#1a1a1a;letter-spacing:0.306px;">Edit</div>
<div class="t" style="left:1612.32px;top:39.61px;font-size:37.08px;line-height:37.08px;color:#b5b5b5;letter-spacing:-0.766px;">Saved</div>
<div class="t" style="left:2136.55px;top:39.61px;font-size:37.08px;line-height:37.08px;color:#1a1a1a;letter-spacing:-0.377px;">0 issues</div>
<div class="t" style="left:2457.84px;top:39.61px;font-size:37.08px;line-height:37.08px;color:#1a1a1a;letter-spacing:-1.099px;">View</div>
<div class="t" style="left:2617.43px;top:39.61px;font-size:37.08px;line-height:37.08px;color:#1a1a1a;letter-spacing:0.134px;">Arrange</div>
<div class="t" style="left:2929.12px;top:39.61px;font-size:37.08px;line-height:37.08px;color:#1a1a1a;letter-spacing:0.665px;">Components</div>
<div class="t" style="left:3562.96px;top:40.11px;font-size:37.08px;line-height:37.08px;color:#1a1a1a;letter-spacing:0.116px;">Live (read-only)</div>
<div class="t" style="left:3889.66px;top:39.61px;font-size:37.08px;line-height:37.08px;color:#0205d3;letter-spacing:0.062px;">Preview</div>
<svg style="left:753px;top:54px;" width="24" height="15" viewBox="0 0 24 15"><path d="M1.2 1 H22.8 L12 13.8 Z" fill="#b7c1c9" stroke="#b7c1c9" stroke-width="1.8" stroke-linejoin="round"/></svg>
<svg style="left:1406.5px;top:55px;" width="24" height="15" viewBox="0 0 24 15"><path d="M1.2 1 H22.8 L12 13.8 Z" fill="#b7c1c9" stroke="#b7c1c9" stroke-width="1.8" stroke-linejoin="round"/></svg>
<svg style="left:2553px;top:57px;" width="22" height="12.5" viewBox="0 0 22 12.5"><path d="M1.2 1 H20.8 L11 11.3 Z" fill="#b7c1c9" stroke="#b7c1c9" stroke-width="1.8" stroke-linejoin="round"/></svg>
<svg style="left:2767px;top:57px;" width="22" height="12.5" viewBox="0 0 22 12.5"><path d="M1.2 1 H20.8 L11 11.3 Z" fill="#b7c1c9" stroke="#b7c1c9" stroke-width="1.8" stroke-linejoin="round"/></svg>
<svg style="left:2080px;top:39px;" width="37" height="35" viewBox="0 0 37 35"><path d="M18.5 3.5 L34 31 H3 Z" fill="#c9c9c9" stroke="#c9c9c9" stroke-width="6" stroke-linejoin="round"/><rect x="16" y="11.5" width="5" height="11" rx="1" fill="#fff"/><rect x="16" y="25" width="5" height="4.6" rx="1" fill="#fff"/></svg>
<svg style="left:2329px;top:36px;" width="46" height="46" viewBox="0 0 46 46"><path d="M1.9 1.2 L37.8 12.4 L13 37.6 Z" fill="#dadada" stroke="#dadada" stroke-width="1" stroke-linejoin="round"/><path d="M24 24 L40.2 40" stroke="#dadada" stroke-width="7" stroke-linecap="round"/></svg>
<svg style="left:2850px;top:26px;" width="55" height="62" viewBox="0 0 55 62"><path d="M27.3 1.2 L52.6 15.1 L27.3 28.5 L1.6 15.1 Z" fill="#8c8c8c" stroke="#8c8c8c" stroke-width="1.2" stroke-linejoin="round"/><path d="M1 19.4 L24.9 32.6 V60 L4.2 49 Q1 47 1 44.5 Z" fill="#8c8c8c" stroke="#8c8c8c" stroke-width="1.2" stroke-linejoin="round"/><path d="M53.6 19.4 L29.7 32.6 V60 L50.4 49 Q53.6 47 53.6 44.5 Z" fill="#8c8c8c" stroke="#8c8c8c" stroke-width="1.2" stroke-linejoin="round"/></svg>
<svg style="left:3194px;top:33px;" width="46" height="50" viewBox="0 0 46 50"><path d="M6.4 14.4 A19.2 19.2 0 1 1 9.4 37.6" fill="none" stroke="#dedede" stroke-width="3.9"/><path d="M1.2 3.5 V15 H12.5 Z" fill="#dedede"/></svg>
<svg style="left:3291px;top:33px;" width="46" height="50" viewBox="0 0 46 50"><path d="M39.6 14.4 A19.2 19.2 0 1 0 36.6 37.6" fill="none" stroke="#dedede" stroke-width="3.9"/><path d="M44.8 3.5 V15 H33.5 Z" fill="#dedede"/></svg>
<svg style="left:3389px;top:39px;" width="47" height="47" viewBox="0 0 47 47"><circle cx="17.6" cy="17" r="14.6" fill="none" stroke="#8f8f8f" stroke-width="5.2"/><path d="M28 27.5 L44 43" stroke="#8f8f8f" stroke-width="6" stroke-linecap="butt"/></svg>
<svg style="left:3499px;top:36px;" width="44" height="44" viewBox="0 0 44 44"><circle cx="22.3" cy="22.2" r="21.6" fill="#999"/><path d="M6.8 12.6 L10.7 7.1 L19.5 4.6 L24.4 6.5 L20.6 9.8 L25.5 13.1 L28.3 8.7 L35.1 12.8 L28.3 18.6 L26.1 23.6 L21.7 23.8 L19.5 26.3 L24.4 28 L26.6 33.5 L22.8 31.3 L16.7 28 L9.6 19.7 L8.5 15.3 Z" fill="#fff" stroke="#fff" stroke-width="0.8" stroke-linejoin="round"/><path d="M28.3 31.8 L35.1 35.4 L29.4 38.9 L25.5 40.3 L26.6 35.1 Z" fill="#fff" stroke="#fff" stroke-width="0.8" stroke-linejoin="round"/></svg>
<svg style="left:4074px;top:33px;" width="52" height="52" viewBox="0 0 52 52"><circle cx="25.5" cy="25.5" r="22.7" fill="none" stroke="#9b9b9b" stroke-width="5.2"/></svg>
<div class="t" style="left:4086px;top:38px;width:27px;text-align:center;font-size:42px;line-height:42px;font-weight:700;color:#9b9b9b;">?</div>
<div style="left:4102.5px;top:27px;width:21px;height:21px;background:#e8251f;border-radius:50%;"></div>
<div style="left:4147.5px;top:5.5px;width:172.5px;height:105px;background:#0205d3;"></div>
<div style="left:4317px;top:5.5px;width:3px;height:105px;background:#3b40da;"></div>
<div class="t" style="left:4181.96px;top:39.61px;font-size:37.08px;line-height:37.08px;color:#fff;letter-spacing:0.484px;">Log in</div>
</div>
<div class="layer" id="L-annot">
<div style="left:114px;top:633px;width:1188px;height:384px;background:transparent;box-sizing:border-box;border:9px solid #fe0000;"></div>
<svg style="left:1300px;top:780px;" width="1710" height="90" viewBox="0 0 1710 90"><path d="M2 45.15 H1690" stroke="#fe0000" stroke-width="9" fill="none"/><path d="M1662.3 16.5 L1691 45.15 L1662.3 73.6" stroke="#fe0000" stroke-width="9" stroke-linecap="round" stroke-linejoin="round" fill="none"/></svg>
</div>
</div>
</body></html>
